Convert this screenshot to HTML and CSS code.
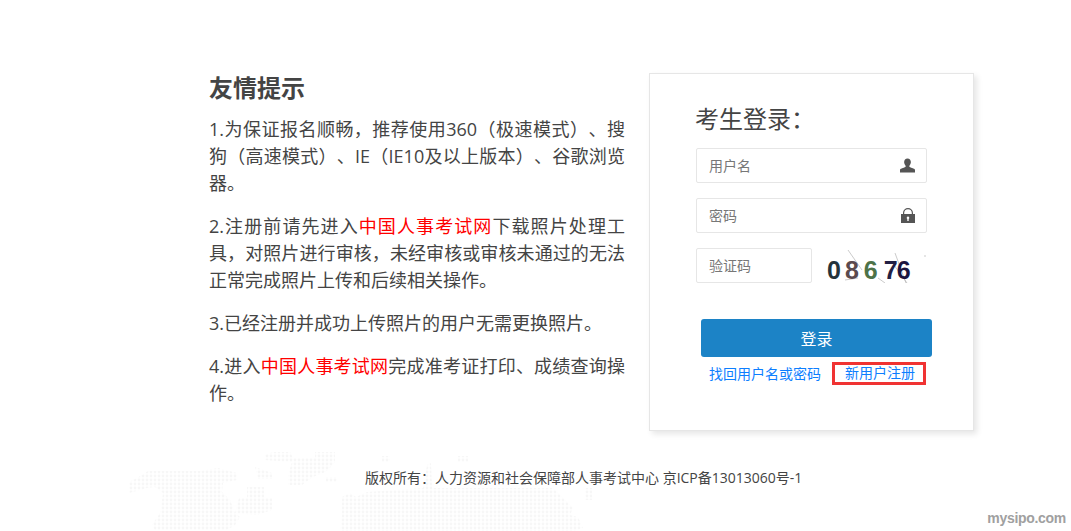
FILE: index.html
```html
<!DOCTYPE html>
<html lang="zh-CN">
<head>
<meta charset="utf-8">
<title>考生登录</title>
<link rel="stylesheet" href="styles.css">
</head>
<body>
<svg class="map" width="490" height="86" viewBox="0 0 490 86" aria-hidden="true">
  <defs>
    <pattern id="dots" x="1" y="1" width="4" height="4" patternUnits="userSpaceOnUse"><circle cx="2" cy="2" r="1.4" fill="#f7f7f7"/></pattern>
  </defs>
  <g fill="url(#dots)">
    <polygon points="9,37 17,33 28,26 80,26 98,23 117,28 117,35 103,38 102,47 110,55 115,68 120,72 115,80 107,85 35,85 32,80 40,68 43,48 35,42 27,43 9,48"/>
    <polygon points="119,53 152,53 152,65 137,70 115,68"/>
    <polygon points="127,42 144,42 144,53 127,53"/>
    <polygon points="135,22 152,28 152,34 138,34"/>
    <polygon points="145,10 153,7 170,7 173,13 195,13 195,7 215,7 215,17 208,25 203,28 193,32 182,40 168,40 168,30 172,17 157,16 145,15"/>
    <polygon points="206,32 217,32 217,37 206,37"/>
    <polygon points="222,52 230,48 236,52 247,47 303,43 307,20 311,18 312,43 433,43 453,63 450,70 458,72 463,83 453,86 220,86 222,70"/>
    <polygon points="262,11 270,11 270,17 262,17"/>
    <polygon points="338,11 348,11 348,17 338,17"/>
    <polygon points="465,43 472,43 472,55 465,55"/>
  </g>
</svg>
<main class="page">
  <section class="tips">
    <h2 class="tips-title">友情提示</h2>
    <p>1.为保证报名顺畅，推荐使用360（极速模式）、搜狗（高速模式）、IE（IE10及以上版本）、谷歌浏览器。</p>
    <p>2.注册前请先进入<a class="hl" href="#">中国人事考试网</a>下载照片处理工具，对照片进行审核，未经审核或审核未通过的无法正常完成照片上传和后续相关操作。</p>
    <p>3.已经注册并成功上传照片的用户无需更换照片。</p>
    <p>4.进入<a class="hl" href="#">中国人事考试网</a>完成准考证打印、成绩查询操作。</p>
  </section>
  <form class="card">
    <h3 class="card-title">考生登录：</h3>
    <div class="field field-gap"><span class="ph">用户名</span>
      <svg class="ico" width="15" height="15" viewBox="0 0 16 15"><path fill="#555" d="M8 0c2.300 0 3.600 1.600 3.600 3.800 0 1.600-.7 3-1.600 3.900v1.200c0 .7 6 1.700 6 3.400V15H0v-2.700c0-1.700 6-2.700 6-3.400V7.700C5.100 6.800 4.400 5.400 4.400 3.800 4.400 1.600 5.700 0 8 0z"/></svg>
    </div>
    <div class="field field-gap"><span class="ph">密码</span>
      <svg class="ico" width="14" height="15" viewBox="0 0 14 15"><path fill="#555" fill-rule="evenodd" d="M0 6h2V5a5 5 0 0 1 10 0v1h2v9H0zM3.200 6h7.600V5a3.800 3.800 0 0 0-7.600 0zM7 8.500a1.300 1.300 0 0 0-.7 2.400V13h1.400v-2.100A1.300 1.300 0 0 0 7 8.500z"/></svg>
    </div>
    <div class="code-row">
      <div class="field field-code"><span class="ph">验证码</span></div>
      <div class="captcha" aria-label="验证码图片">
        <svg class="noise" width="100" height="34" viewBox="0 0 100 34"><path fill="none" stroke="#a8a8a8" stroke-width=".6" d="M21 1l14 20M68 4l11 30M64 12l16 22M18 31l13-2M51 29l7 5M98 6v2"/></svg>
        <span class="c1">0</span><span class="c2">8</span><span class="c3">6</span><span class="c4">7</span><span class="c5">6</span>
      </div>
    </div>
    <button class="submit" type="button">登录</button>
    <div class="links">
      <a class="link" href="#">找回用户名或密码</a>
      <a class="link link-new" href="#">新用户注册</a>
    </div>
  </form>
</main>
<footer class="foot">版权所有：人力资源和社会保障部人事考试中心 京ICP备13013060号-1</footer>
<div class="mark">mysipo.com</div>
</body>
</html>
```
FILE: styles.css
```css
* { box-sizing: border-box; }
html, body { height: 100%; }
body {
  margin: 0;
  height: 531px;
  overflow: hidden;
  position: relative;
  background: #fff;
  color: #444;
  font-family: "Open Sans", "Noto Sans CJK SC", sans-serif;
  text-spacing-trim: space-all;
  text-autospace: no-autospace;
}
.map { position: absolute; left: 120px; top: 445px; }
.page {
  position: relative;
  display: flex;
  align-items: flex-start;
  padding: 73px 0 0 209px;
}
.tips { width: 416px; margin-right: 24px; font-size: 18px; line-height: 27px; color: #444; text-align: justify; }
.tips-title { margin: 0 0 13px; font-size: 24px; line-height: 30px; font-weight: 700; color: #444; }
.tips p { margin: 0 0 16px; }
.hl { color: #f00; text-decoration: none; }
.card {
  width: 325px;
  height: 358px;
  background: #fff;
  border: 1px solid #e6e6e6;
  box-shadow: 3px 3px 6px rgba(0,0,0,.1);
  padding: 28px 46px 0;
}
.card-title { margin: 0 0 13px -1px; font-size: 24px; line-height: 33px; font-weight: 400; color: #444; }
.field {
  display: flex;
  align-items: center;
  justify-content: space-between;
  width: 231px;
  height: 35px;
  border: 1px solid #e6e6e6;
  border-radius: 2px;
  padding: 0 11px 0 12px;
  font-size: 14px;
  background: #fff;
}
.field-gap { margin-bottom: 15px; }
.field-code { width: 116px; }
.ph { color: #777; position: relative; top: -1px; }
.ico { display: block; }
.code-row { display: flex; align-items: center; gap: 15px; width: 231px; }
.captcha {
  position: relative;
  width: 100px;
  height: 34px;
  display: flex;
  align-items: center;
  padding: 10px 0 0 0;
  font-family: "Liberation Sans", sans-serif;
  font-weight: 700;
  font-size: 25px;
}
.noise { position: absolute; left: 0; top: 0; }
.captcha span { position: relative; }
.c1 { color: #25333b; }
.c2 { color: #5a4a4e; margin-left: 4px; }
.c3 { color: #4d7248; margin-left: 5px; }
.c4 { color: #222044; margin-left: 6px; }
.c5 { color: #1b1540; margin-left: -1px; }
.submit {
  display: block;
  width: 231px;
  height: 38px;
  margin: 36px 0 0 5px;
  border: 0;
  border-radius: 3px;
  background: #1c83c6;
  color: #fff;
  font: inherit;
  font-size: 16px;
}
.links { display: flex; align-items: center; margin: 6px 0 0 13px; font-size: 14px; width: 225px; }
.link { color: #0d7eff; text-decoration: none; line-height: 20px; position: relative; top: -1px; }
.link-new {
  margin-left: 11px;
  padding: 0 10px;
  border: 3px solid #f03333;
  height: 23px;
  line-height: 15px;
  width: 94px;
  white-space: nowrap;
}
.foot {
  position: absolute;
  left: 365px;
  top: 468px;
  font-size: 14px;
  line-height: 20px;
  color: #444;
  white-space: nowrap;
}
.mark {
  position: absolute;
  right: 5px;
  bottom: 5px;
  font-family: "Liberation Sans", sans-serif;
  font-weight: 700;
  font-size: 14px;
  letter-spacing: -.3px;
  color: #a0a0a0;
}
```
